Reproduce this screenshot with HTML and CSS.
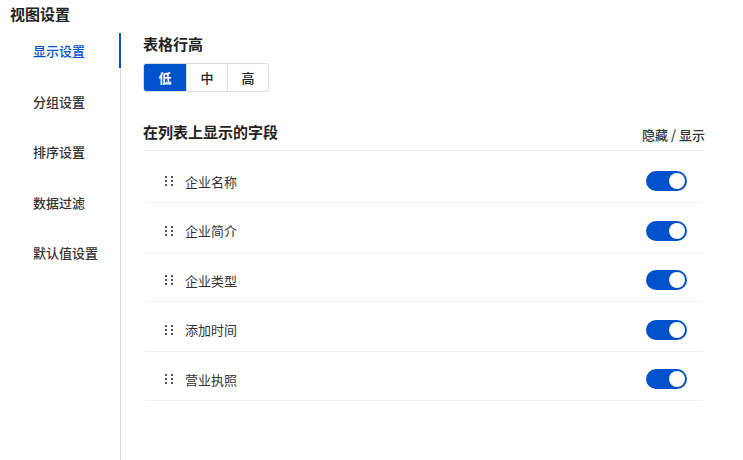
FILE: index.html
```html
<!DOCTYPE html>
<html lang="zh-CN">
<head>
    <meta charset="UTF-8">
    <meta name="viewport" content="width=device-width, initial-scale=1.0">
    <title>视图设置</title>
    <link rel="stylesheet" href="styles.css">
</head>
<body>
    <h1 class="page-title">视图设置</h1>
    <div class="layout">
        <ul class="side-nav">
            <li class="nav-item active">显示设置</li>
            <li class="nav-item">分组设置</li>
            <li class="nav-item">排序设置</li>
            <li class="nav-item">数据过滤</li>
            <li class="nav-item">默认值设置</li>
        </ul>

        <div class="content">
            <h2 class="section-title">表格行高</h2>
            <div class="segment">
                <button class="seg-btn active">低</button>
                <button class="seg-btn">中</button>
                <button class="seg-btn">高</button>
            </div>

            <div class="field-head">
                <h2 class="section-title">在列表上显示的字段</h2>
                <span class="field-hint">隐藏 / 显示</span>
            </div>

            <ul class="field-list">
                <li class="field-row">
                    <span class="drag"><i></i><i></i><i></i><i></i><i></i><i></i></span>
                    <span class="field-name">企业名称</span>
                    <span class="switch on"></span>
                </li>
                <li class="field-row">
                    <span class="drag"><i></i><i></i><i></i><i></i><i></i><i></i></span>
                    <span class="field-name">企业简介</span>
                    <span class="switch on"></span>
                </li>
                <li class="field-row">
                    <span class="drag"><i></i><i></i><i></i><i></i><i></i><i></i></span>
                    <span class="field-name">企业类型</span>
                    <span class="switch on"></span>
                </li>
                <li class="field-row">
                    <span class="drag"><i></i><i></i><i></i><i></i><i></i><i></i></span>
                    <span class="field-name">添加时间</span>
                    <span class="switch on"></span>
                </li>
                <li class="field-row">
                    <span class="drag"><i></i><i></i><i></i><i></i><i></i><i></i></span>
                    <span class="field-name">营业执照</span>
                    <span class="switch on"></span>
                </li>
            </ul>
        </div>
    </div>
</body>
</html>
```

FILE: styles.css
```css
body {
    margin: 0;
    font-family: "Noto Sans CJK SC", "Noto Sans", sans-serif;
    color: #333;
    background: #fff;
    font-size: 13px;
}

ul {
    list-style: none;
    margin: 0;
    padding: 0;
}

.page-title {
    margin: 0;
    padding: 4px 10px 0;
    height: 29px;
    font-size: 15px;
    line-height: 20px;
    font-weight: 700;
    color: #222;
}

.layout {
    display: flex;
    height: 427px;
}

.side-nav {
    width: 120px;
    border-right: 1px solid #ddd;
    display: flex;
    flex-direction: column;
    gap: 15.5px;
}

.nav-item {
    position: relative;
    height: 35px;
    line-height: 35px;
    padding-left: 33px;
    font-weight: 500;
    color: #333;
}

.nav-item.active {
    color: #0052cc;
}

.nav-item.active::after {
    content: "";
    position: absolute;
    top: 0;
    right: -1px;
    width: 2px;
    height: 100%;
    background: #0052cc;
}

.content {
    flex: 1;
    padding: 1px 38px 0 22px;
}

.section-title {
    margin: 0;
    font-size: 15px;
    line-height: 20px;
    font-weight: 700;
    color: #222;
}

.segment {
    display: inline-flex;
    margin-top: 9px;
    border: 1px solid #ddd;
    border-radius: 3px;
    overflow: hidden;
}

.seg-btn {
    width: 41px;
    height: 27px;
    border: none;
    border-left: 1px solid #ddd;
    background: #fff;
    font-family: inherit;
    font-size: 13px;
    font-weight: 500;
    color: #222;
    padding: 0;
}

.seg-btn:first-child {
    border-left: none;
    width: 42px;
}

.seg-btn.active {
    background: #0052cc;
    color: #fff;
    font-weight: 700;
}

.field-head {
    display: flex;
    justify-content: space-between;
    align-items: flex-end;
    margin-top: 30px;
    padding-bottom: 8px;
    border-bottom: 1px solid #f0f0f0;
}

.field-hint {
    font-size: 13px;
    line-height: 16px;
    font-weight: 500;
    color: #333;
    margin-bottom: -1px;
}

.field-list {
    padding-top: 2.5px;
}

.field-row {
    display: flex;
    align-items: center;
    height: 20px;
    padding: 17.5px 18px 11px 22px;
    border-bottom: 1px solid #f0f0f0;
    border-radius: 0 0 4px 4px;
}

.drag {
    display: grid;
    grid-template-columns: 2px 2px;
    column-gap: 4px;
    row-gap: 2px;
    width: 8px;
    margin-right: 12px;
}

.drag i {
    width: 1.5px;
    height: 2px;
    background: #555;
}

.field-name {
    flex: 1;
    color: #333;
}

.switch {
    position: relative;
    width: 41px;
    height: 20px;
    border-radius: 10px;
    background: #ccc;
}

.switch.on {
    background: #0052cc;
}

.switch::after {
    content: "";
    position: absolute;
    top: 2px;
    left: 2px;
    width: 16px;
    height: 16px;
    border-radius: 50%;
    background: #fff;
    box-shadow: 0 1px 2px rgba(0, 0, 0, 0.2);
}

.switch.on::after {
    left: 23px;
}
```
